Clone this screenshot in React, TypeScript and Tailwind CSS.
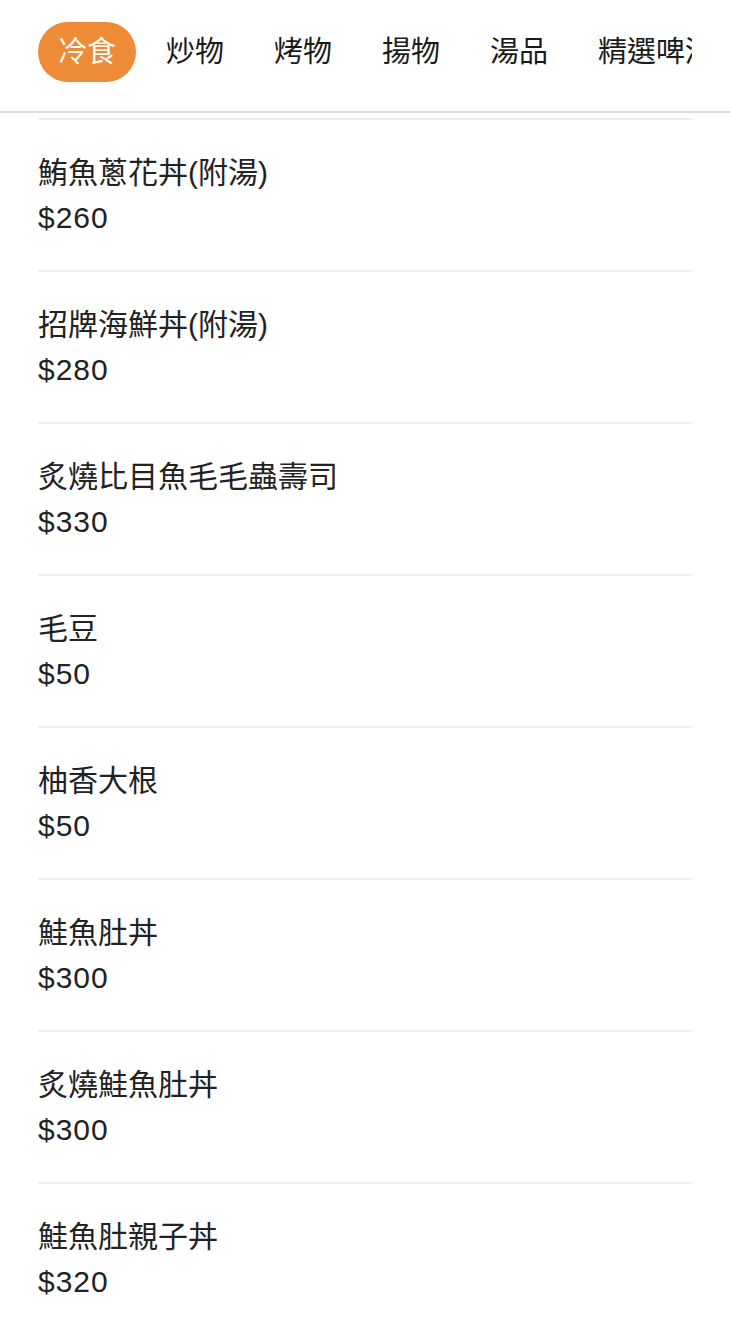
import { useState } from 'react';

const tabs = ['冷食', '炒物', '烤物', '揚物', '湯品', '精選啤酒'];

const items = [
  { name: '鮪魚蔥花丼(附湯)', price: 260 },
  { name: '招牌海鮮丼(附湯)', price: 280 },
  { name: '炙燒比目魚毛毛蟲壽司', price: 330 },
  { name: '毛豆', price: 50 },
  { name: '柚香大根', price: 50 },
  { name: '鮭魚肚丼', price: 300 },
  { name: '炙燒鮭魚肚丼', price: 300 },
  { name: '鮭魚肚親子丼', price: 320 },
];

export default function App() {
  const [active, setActive] = useState(0);

  return (
    <div className="h-[1323px] overflow-hidden bg-white text-[#222] font-['Liberation_Sans','Noto_Sans_CJK_TC',sans-serif]">
      {/* Category tabs */}
      <header className="h-[113px] px-[38px] pt-[22px] border-b-2 border-[#dedede] bg-white">
        <div className="flex gap-[10px] overflow-hidden">
          {tabs.map((t, i) => (
            <button
              key={t}
              onClick={() => setActive(i)}
              className={`h-[60px] shrink-0 px-[20px] rounded-full text-[29px] leading-none whitespace-nowrap ${
                active === i ? 'bg-[#ee8b36] text-white' : 'text-[#1a1a1a]'
              }`}
            >
              {t}
            </button>
          ))}
        </div>
      </header>

      {/* Menu list */}
      <div className="px-[38px] pt-[5px]">
        {items.map((item, i) => (
          <div key={i} className="border-t-2 border-[#f0f0f0] pt-[31px] pb-[30px]">
            <div className="text-[30px] leading-[44px]">{item.name}</div>
            <div className="text-[30px] leading-[45px] tracking-[1px]">${item.price}</div>
          </div>
        ))}
      </div>
    </div>
  );
}
